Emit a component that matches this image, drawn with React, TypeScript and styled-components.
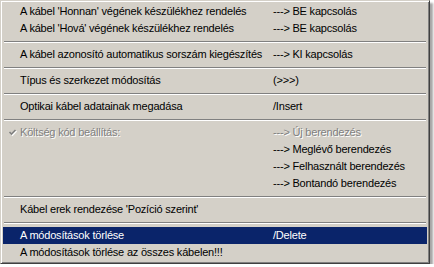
import React from "react";
import styled, { createGlobalStyle } from "styled-components";

const Global = createGlobalStyle`
  html, body { margin: 0; padding: 0; background: #ffffff; }
  body { font-family: "Liberation Sans", Arial, sans-serif; }
`;

const Menu = styled.div`
  box-sizing: border-box;
  width: 430px;
  background: #d4d0c8;
  border-style: solid;
  border-width: 1px;
  border-color: #d4d0c8 #404040 #404040 #d4d0c8;
  box-shadow: inset 1px 1px 0 #ffffff, inset -1px -1px 0 #808080,
    3px 3px 2px rgba(0, 0, 0, 0.35);
  padding: 2px;
  display: flex;
  flex-direction: column;
  font-family: "Liberation Sans", Arial, sans-serif;
  font-size: 11px;
  letter-spacing: -0.2px;
`;

const Row = styled.div<{ $active?: boolean; $disabled?: boolean }>`
  display: grid;
  grid-template-columns: 17px 253px 1fr;
  align-items: center;
  height: 17px;
  line-height: 17px;
  white-space: nowrap;
  background: ${(p) => (p.$active ? "#0a246a" : "transparent")};
  color: ${(p) => (p.$active ? "#ffffff" : p.$disabled ? "#808080" : "#000000")};
  text-shadow: ${(p) => (p.$disabled ? "1px 1px 0 #ffffff" : "none")};
`;

const Check = styled.span`
  display: flex;
  justify-content: center;
  align-items: center;
  padding-left: 1px;
`;

const Label = styled.span``;
const Shortcut = styled.span``;

const Separator = styled.div`
  height: 9px;
  display: flex;
  align-items: center;
  padding: 0 1px;
  &::after {
    content: "";
    flex: 1;
    height: 0;
    border-top: 1px solid #808080;
    border-bottom: 1px solid #ffffff;
  }
`;

const CheckMark = () => (
  <svg width="9" height="9" viewBox="0 0 9 9" style={{ overflow: "visible" }}>
    <path d="M1.5 4 L3.5 6 L7.5 2" fill="none" stroke="#ffffff" strokeWidth="1.6" transform="translate(1 1)" />
    <path d="M1.5 4 L3.5 6 L7.5 2" fill="none" stroke="#808080" strokeWidth="1.6" />
  </svg>
);

type Item =
  | { sep: true }
  | { sep?: false; label: string; shortcut?: string; active?: boolean; disabled?: boolean; checked?: boolean };

const items: Item[] = [
  { label: "A kábel 'Honnan' végének készülékhez rendelés", shortcut: "---> BE kapcsolás" },
  { label: "A kábel 'Hová' végének készülékhez rendelés", shortcut: "---> BE kapcsolás" },
  { sep: true },
  { label: "A kábel azonosító automatikus sorszám kiegészítés", shortcut: "---> KI kapcsolás" },
  { sep: true },
  { label: "Típus és szerkezet módosítás", shortcut: "(>>>)" },
  { sep: true },
  { label: "Optikai kábel adatainak megadása", shortcut: "/Insert" },
  { sep: true },
  { label: "Költség kód beállítás:", shortcut: "---> Új berendezés", disabled: true, checked: true },
  { label: "", shortcut: "---> Meglévő berendezés" },
  { label: "", shortcut: "---> Felhasznált berendezés" },
  { label: "", shortcut: "---> Bontandó berendezés" },
  { sep: true },
  { label: "Kábel erek rendezése 'Pozíció szerint'" },
  { sep: true },
  { label: "A módosítások törlése", shortcut: "/Delete", active: true },
  { label: "A módosítások törlése az összes kábelen!!!" },
];

export default function App() {
  return (
    <>
      <Global />
      <Menu>
        {items.map((it, i) =>
          it.sep ? (
            <Separator key={i} />
          ) : (
            <Row key={i} $active={it.active} $disabled={it.disabled}>
              <Check>{it.checked ? <CheckMark /> : null}</Check>
              <Label>{it.label}</Label>
              <Shortcut>{it.shortcut ?? ""}</Shortcut>
            </Row>
          )
        )}
      </Menu>
    </>
  );
}
